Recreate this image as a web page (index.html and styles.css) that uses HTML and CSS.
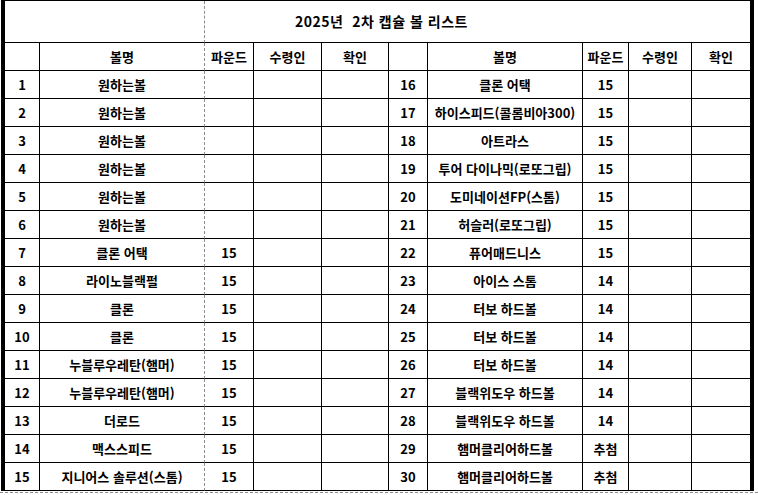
FILE: index.html
```html
<!DOCTYPE html>
<html lang="ko">
<head>
<meta charset="utf-8">
<title>2025년 2차 캡슐 볼 리스트</title>
<link rel="stylesheet" href="styles.css">
</head>
<body>
<div class="sheet">
  <div class="grid">
    <div class="cell title-left"></div>
    <div class="cell title-right"><span class="title-text">2025년  2차 캡슐 볼 리스트</span></div>

    <div class="cell"></div><div class="cell c2">볼명</div><div class="cell">파운드</div><div class="cell">수령인</div><div class="cell">확인</div>
    <div class="cell"></div><div class="cell">볼명</div><div class="cell">파운드</div><div class="cell">수령인</div><div class="cell last">확인</div>

    <div class="cell">1</div><div class="cell c2">원하는볼</div><div class="cell"></div><div class="cell"></div><div class="cell"></div>
    <div class="cell">16</div><div class="cell">클론 어택</div><div class="cell">15</div><div class="cell"></div><div class="cell last"></div>

    <div class="cell">2</div><div class="cell c2">원하는볼</div><div class="cell"></div><div class="cell"></div><div class="cell"></div>
    <div class="cell">17</div><div class="cell">하이스피드(콜롬비아300)</div><div class="cell">15</div><div class="cell"></div><div class="cell last"></div>

    <div class="cell">3</div><div class="cell c2">원하는볼</div><div class="cell"></div><div class="cell"></div><div class="cell"></div>
    <div class="cell">18</div><div class="cell">아트라스</div><div class="cell">15</div><div class="cell"></div><div class="cell last"></div>

    <div class="cell">4</div><div class="cell c2">원하는볼</div><div class="cell"></div><div class="cell"></div><div class="cell"></div>
    <div class="cell">19</div><div class="cell">투어 다이나믹(로또그립)</div><div class="cell">15</div><div class="cell"></div><div class="cell last"></div>

    <div class="cell">5</div><div class="cell c2">원하는볼</div><div class="cell"></div><div class="cell"></div><div class="cell"></div>
    <div class="cell">20</div><div class="cell">도미네이션FP(스톰)</div><div class="cell">15</div><div class="cell"></div><div class="cell last"></div>

    <div class="cell">6</div><div class="cell c2">원하는볼</div><div class="cell"></div><div class="cell"></div><div class="cell"></div>
    <div class="cell">21</div><div class="cell">허슬러(로또그립)</div><div class="cell">15</div><div class="cell"></div><div class="cell last"></div>

    <div class="cell">7</div><div class="cell c2">클론 어택</div><div class="cell">15</div><div class="cell"></div><div class="cell"></div>
    <div class="cell">22</div><div class="cell">퓨어매드니스</div><div class="cell">15</div><div class="cell"></div><div class="cell last"></div>

    <div class="cell">8</div><div class="cell c2">라이노블랙펄</div><div class="cell">15</div><div class="cell"></div><div class="cell"></div>
    <div class="cell">23</div><div class="cell">아이스 스톰</div><div class="cell">14</div><div class="cell"></div><div class="cell last"></div>

    <div class="cell">9</div><div class="cell c2">클론</div><div class="cell">15</div><div class="cell"></div><div class="cell"></div>
    <div class="cell">24</div><div class="cell">터보 하드볼</div><div class="cell">14</div><div class="cell"></div><div class="cell last"></div>

    <div class="cell">10</div><div class="cell c2">클론</div><div class="cell">15</div><div class="cell"></div><div class="cell"></div>
    <div class="cell">25</div><div class="cell">터보 하드볼</div><div class="cell">14</div><div class="cell"></div><div class="cell last"></div>

    <div class="cell">11</div><div class="cell c2">누블루우레탄(햄머)</div><div class="cell">15</div><div class="cell"></div><div class="cell"></div>
    <div class="cell">26</div><div class="cell">터보 하드볼</div><div class="cell">14</div><div class="cell"></div><div class="cell last"></div>

    <div class="cell">12</div><div class="cell c2">누블루우레탄(햄머)</div><div class="cell">15</div><div class="cell"></div><div class="cell"></div>
    <div class="cell">27</div><div class="cell">블랙위도우 하드볼</div><div class="cell">14</div><div class="cell"></div><div class="cell last"></div>

    <div class="cell">13</div><div class="cell c2">더로드</div><div class="cell">15</div><div class="cell"></div><div class="cell"></div>
    <div class="cell">28</div><div class="cell">블랙위도우 하드볼</div><div class="cell">14</div><div class="cell"></div><div class="cell last"></div>

    <div class="cell">14</div><div class="cell c2">맥스스피드</div><div class="cell">15</div><div class="cell"></div><div class="cell"></div>
    <div class="cell">29</div><div class="cell">햄머클리어하드볼</div><div class="cell">추첨</div><div class="cell"></div><div class="cell last"></div>

    <div class="cell">15</div><div class="cell c2">지니어스 솔루션(스톰)</div><div class="cell">15</div><div class="cell"></div><div class="cell"></div>
    <div class="cell">30</div><div class="cell">햄머클리어하드볼</div><div class="cell">추첨</div><div class="cell"></div><div class="cell last"></div>
  </div>
</div>
<div class="page-break"></div>
</body>
</html>
```

FILE: styles.css
```css
html, body {
  margin: 0;
  padding: 0;
  background: #ffffff;
}

body {
  font-family: "Noto Sans CJK KR", "Noto Sans", sans-serif;
  font-weight: 700;
  font-size: 13px;
  color: #000000;
}

.sheet {
  margin-left: 1px;
  width: 745px;
  border-left: 4px solid #000;
  border-right: 4px solid #000;
  border-top: 1px solid #000;
}

.grid {
  display: grid;
  grid-template-columns: 35px 165px 49px 68px 67px 39px 155px 46px 63px 58px;
  grid-template-rows: 42px 28px repeat(15, 28px);
}

.cell {
  box-sizing: border-box;
  border-right: 1px solid #000;
  border-bottom: 1px solid #000;
  display: flex;
  align-items: center;
  justify-content: center;
  white-space: nowrap;
  line-height: 1;
  padding-bottom: 1px;
}

.cell.c2 {
  border-right: 1px dashed #8c8c8c;
}

.cell.last {
  border-right: none;
}

.title-left {
  grid-column: 1 / 3;
  border-right: 1px dashed #8c8c8c;
}

.title-right {
  grid-column: 3 / 11;
  border-right: none;
  padding-right: 192px;
}

.title-text {
  white-space: pre;
  font-size: 14px;
  letter-spacing: 0.5px;
}

.page-break {
  margin-top: 1px;
  width: 758px;
  border-top: 1px dashed #8c8c8c;
}
```
